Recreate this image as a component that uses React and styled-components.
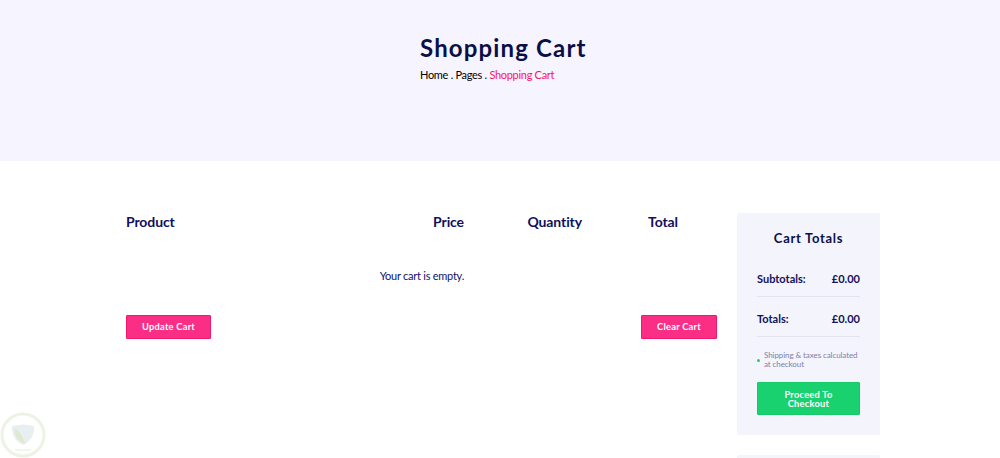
import React from "react";
import styled, { createGlobalStyle } from "styled-components";

const Global = createGlobalStyle`
  html, body { margin: 0; padding: 0; background: #fff; overflow: hidden; }
  body { font-family: Lato, "Liberation Sans", sans-serif; color: #0d0e43; }
  * { box-sizing: border-box; }
`;
const Page = styled.div`position: relative; width: 1000px; height: 458px; overflow: hidden;`;
const Hero = styled.header`
  height: 161px; background: #f6f5ff; padding: 34px 0 0 420px;
`;
const Title = styled.h1`
  margin: 0; font: 700 24px/28px Lato, sans-serif; letter-spacing: 1.15px; color: #0b0f47;
`;
const Crumbs = styled.div`
  margin-top: 5px; font-size: 11px; line-height: 15px; color: #000; letter-spacing: -0.3px;
`;
const Current = styled.span`color: #f8145f;`;
const Main = styled.main`
  display: flex; align-items: flex-start; gap: 20px; padding: 52px 120px 0 126px;
`;
const Left = styled.section`width: 591px;`;
const HeadRow = styled.div`
  display: grid; grid-template-columns: 169px 169px 118px 96px; height: 18px;
`;
const HeadCell = styled.div`
  font-size: 14px; line-height: 18px; font-weight: 700; letter-spacing: -0.1px; color: #10105c;
  text-align: ${p => (p.$left ? "left" : "right")};
  white-space: nowrap;
`;
const Empty = styled.p`
  width: 338px; margin: 38px 0 0; text-align: right;
  font-size: 11px; line-height: 14px; letter-spacing: -0.25px; color: #12126a;
`;
const Actions = styled.div`display: flex; justify-content: space-between; margin-top: 32px;`;
const PinkButton = styled.button`
  width: ${p => p.$w}px; height: 24px; padding: 0 0 1px; border: 1px solid #f0186f; border-radius: 1px;
  background: #fb2e86; color: #fff; font: 700 9.3px/1 Lato, sans-serif; letter-spacing: .25px;
`;
const Side = styled.aside`display: flex; flex-direction: column; gap: 20px; width: 143px;`;
const Card = styled.div`
  background: #f4f4fc; border-radius: 2px; padding: 17px 20px 20px; height: ${p => p.$h}px; flex: none;
`;
const CardTitle = styled.h2`
  margin: 0 0 26px; text-align: center; font: 700 13px/16px Lato, sans-serif; letter-spacing: .7px; color: #0b0f47;
`;
const Line = styled.div`
  display: flex; justify-content: space-between; align-items: flex-start; height: 25px; margin-bottom: 15px;
  font-size: 11px; font-weight: 700; line-height: 14px; color: #10105c;
  border-bottom: 1px solid #e3e3ef;
`;
const Note = styled.div`
  display: flex; align-items: center; gap: 4px; margin-top: -1px; font-size: 8px; line-height: 9px; letter-spacing: -0.08px; color: #7f7fa8;
`;
const Dot = styled.span`width: 3px; height: 3px; border-radius: 50%; background: #19d16f; flex: none;`;
const Checkout = styled.button`
  display: block; width: 103px; height: 33px; margin-top: 13px; padding: 2px 12px 0; border: 1px solid #16c966; border-radius: 1px;
  background: #19d16f; color: #fff; font: 700 9.3px/8.5px Lato, sans-serif; letter-spacing: .25px; text-align: center;
`;
const Badge = styled.svg`position: absolute; left: 0; bottom: 0; width: 47px; height: 47px;`;

export default function App() {
  return (
    <Page>
      <Global />
      <Hero>
        <Title>Shopping Cart</Title>
        <Crumbs>Home . Pages . <Current>Shopping Cart</Current></Crumbs>
      </Hero>
      <Main>
        <Left>
          <HeadRow>
            <HeadCell $left>Product</HeadCell>
            <HeadCell>Price</HeadCell>
            <HeadCell>Quantity</HeadCell>
            <HeadCell>Total</HeadCell>
          </HeadRow>
          <Empty>Your cart is empty.</Empty>
          <Actions>
            <PinkButton $w={85}>Update Cart</PinkButton>
            <PinkButton $w={76}>Clear Cart</PinkButton>
          </Actions>
        </Left>
        <Side>
          <Card $h={222}>
            <CardTitle>Cart Totals</CardTitle>
            <Line><span>Subtotals:</span><span>£0.00</span></Line>
            <Line><span>Totals:</span><span>£0.00</span></Line>
            <Note><Dot /><span>Shipping &amp; taxes calculated at checkout</span></Note>
            <Checkout>Proceed To Checkout</Checkout>
          </Card>
          <Card $h={60} />
        </Side>
      </Main>
      <Badge viewBox="0 0 47 47" aria-hidden="true">
        <circle cx="23" cy="24" r="21" fill="#fff" stroke="#edf3e4" strokeWidth="3" />
        <path d="M12 15 Q23 12 34 15 Q35 28 23 34 Q11 28 12 15Z" fill="#e8eff0" />
        <path d="M15 17 Q22 22 25 33 Q13 28 15 17Z" fill="#dfe9d0" />
        <path d="M15 39 H31" stroke="#eef1ea" strokeWidth="1.5" />
      </Badge>
    </Page>
  );
}
